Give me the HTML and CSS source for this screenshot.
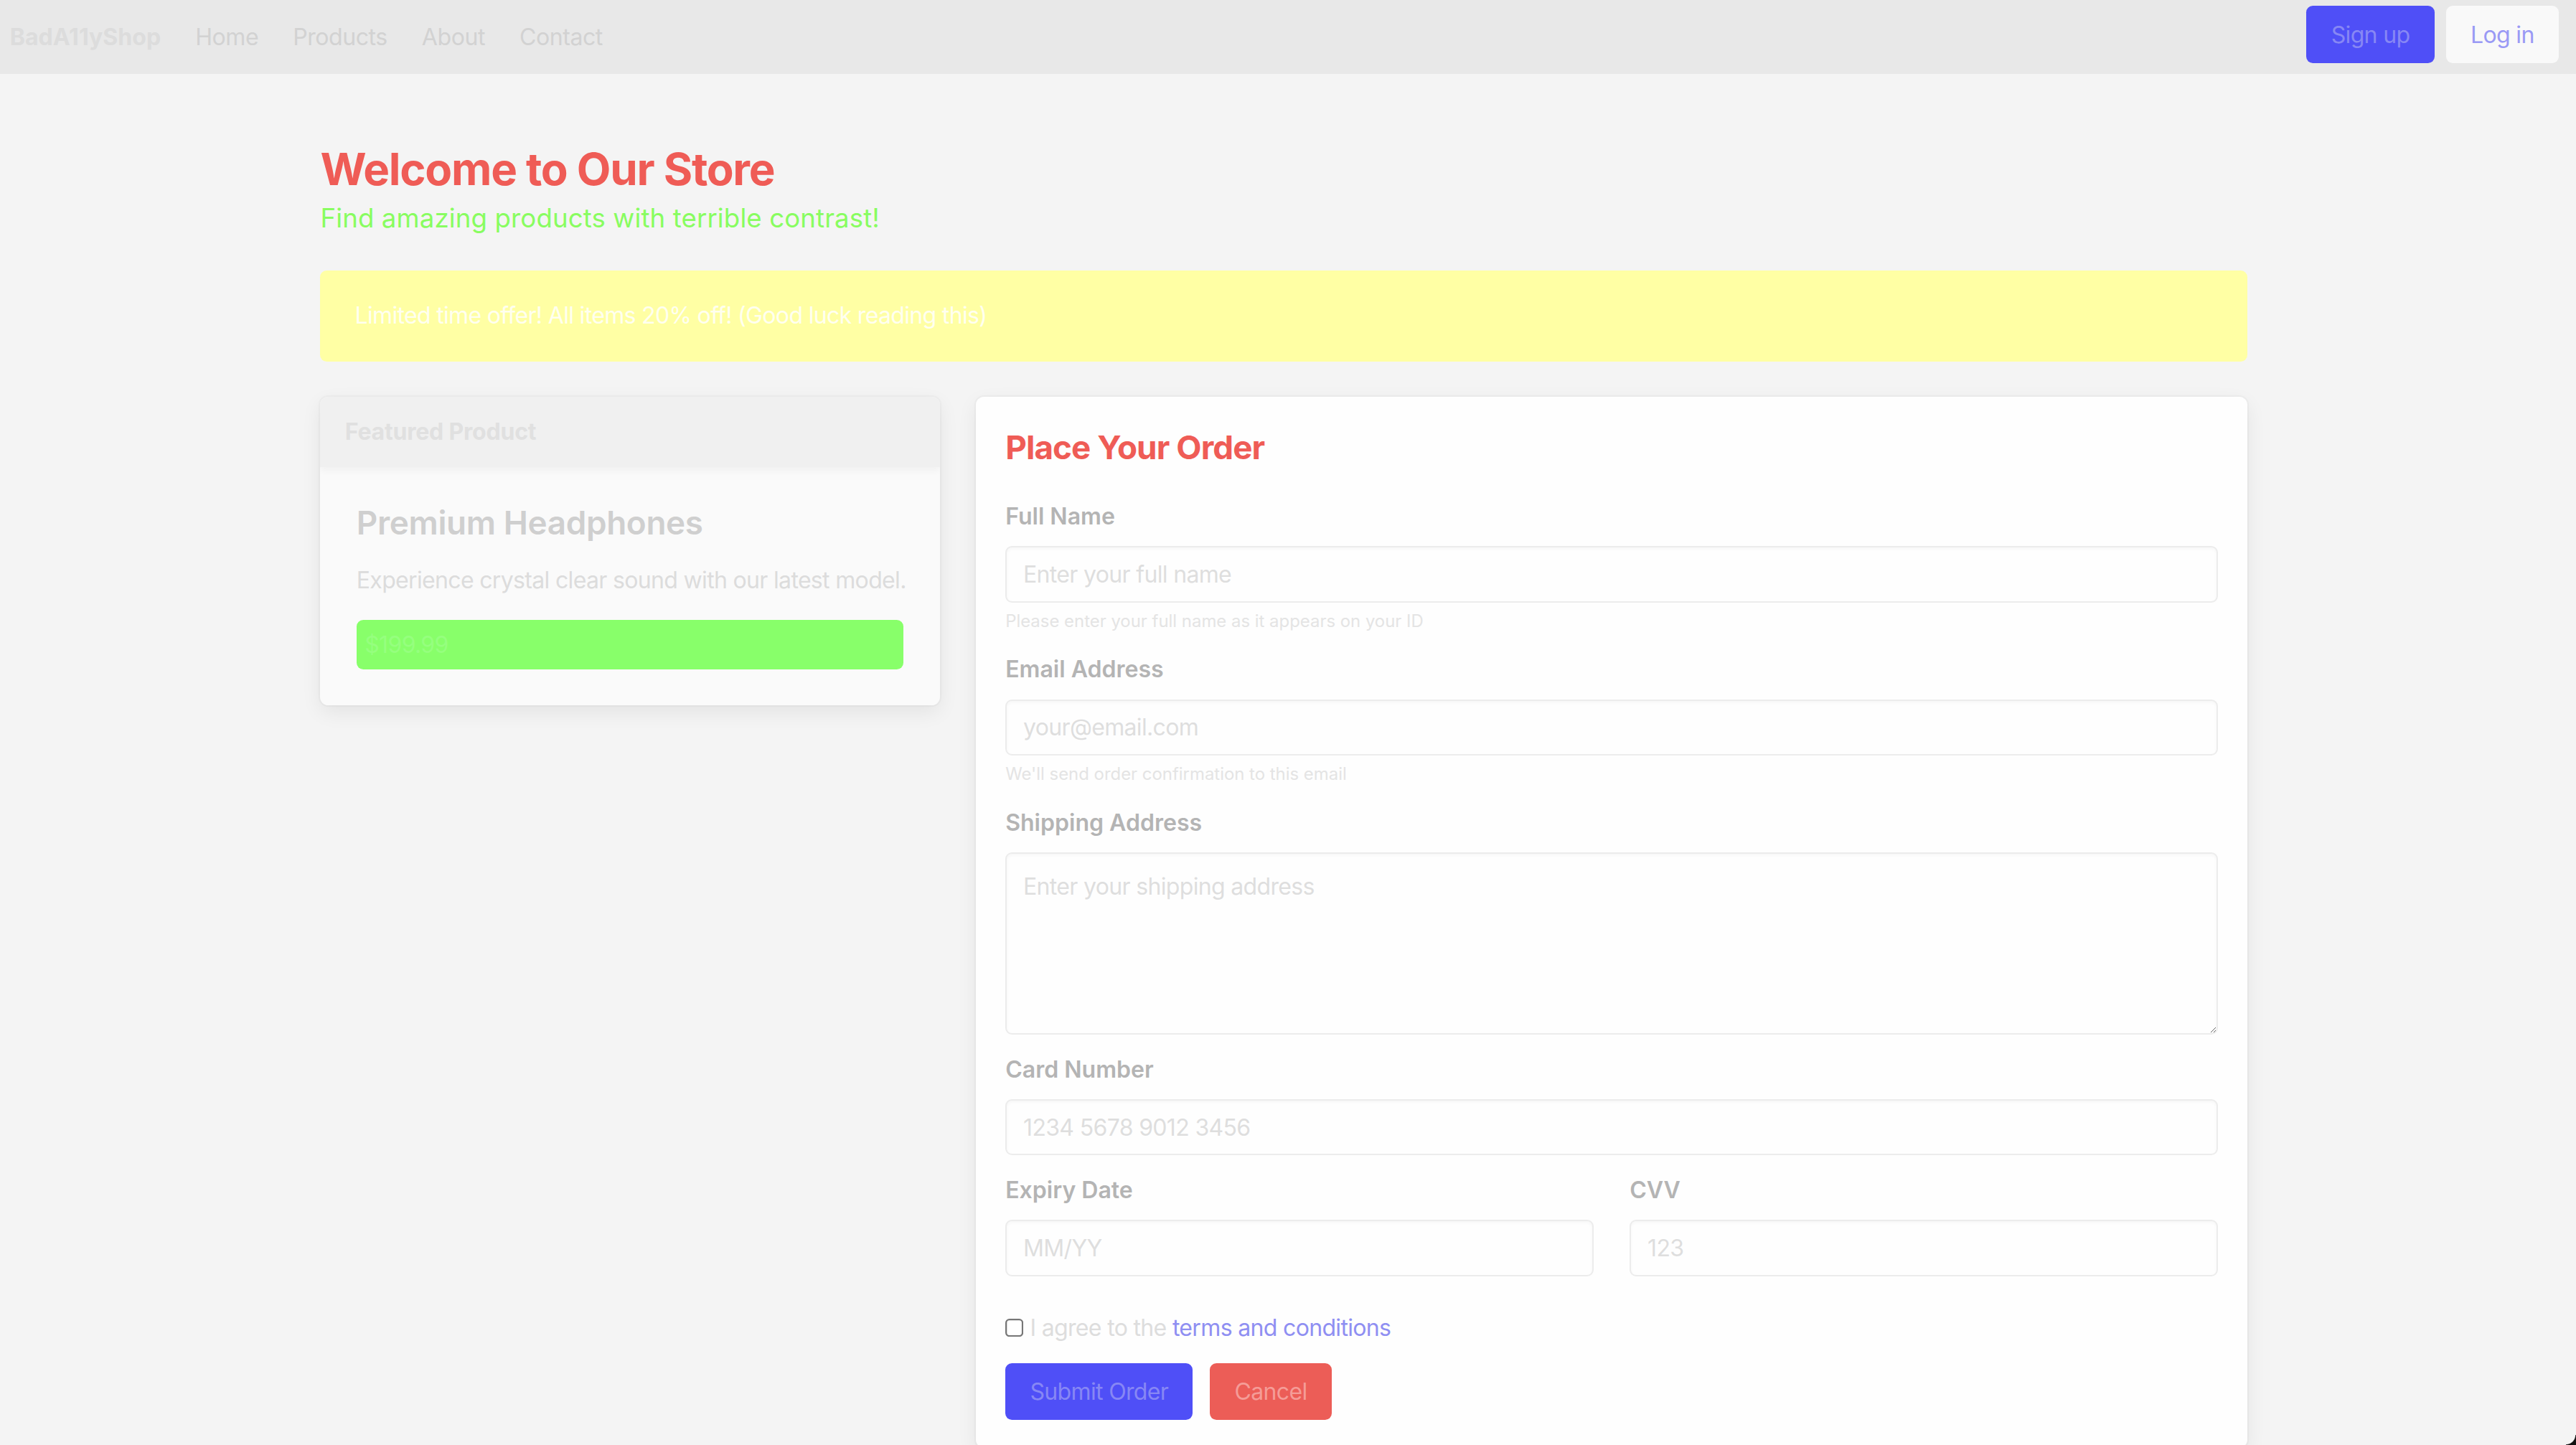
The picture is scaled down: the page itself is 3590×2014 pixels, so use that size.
FILE: index.html
```html
<!DOCTYPE html>
<html lang="en">
<head>
<meta charset="utf-8">
<title>BadA11yShop</title>
<link rel="stylesheet" href="styles.css">
</head>
<body>
<nav class="topbar">
  <div class="nav-left">
    <a class="brand" href="#">BadA11yShop</a>
    <a class="nav-link" href="#">Home</a>
    <a class="nav-link" href="#">Products</a>
    <a class="nav-link" href="#">About</a>
    <a class="nav-link" href="#">Contact</a>
  </div>
  <div class="nav-right">
    <button class="btn btn-primary" type="button">Sign up</button>
    <button class="btn btn-light" type="button">Log in</button>
  </div>
</nav>

<main class="container">
  <header class="hero">
    <h1 class="hero-title">Welcome to Our Store</h1>
    <p class="hero-subtitle">Find amazing products with terrible contrast!</p>
  </header>

  <div class="promo">Limited time offer! All items 20% off! (Good luck reading this)</div>

  <div class="content">
    <section class="card product-card">
      <div class="card-header">Featured Product</div>
      <div class="card-body">
        <h3 class="product-title">Premium Headphones</h3>
        <p class="product-desc">Experience crystal clear sound with our latest model.</p>
        <div class="price">$199.99</div>
      </div>
    </section>

    <section class="card order-card">
      <h2 class="order-title">Place Your Order</h2>
      <form class="order-form">
        <div class="form-group">
          <label class="form-label">Full Name</label>
          <input class="form-input" type="text" placeholder="Enter your full name">
          <small class="form-help">Please enter your full name as it appears on your ID</small>
        </div>
        <div class="form-group">
          <label class="form-label">Email Address</label>
          <input class="form-input" type="email" placeholder="your@email.com">
          <small class="form-help">We'll send order confirmation to this email</small>
        </div>
        <div class="form-group">
          <label class="form-label">Shipping Address</label>
          <textarea class="form-input form-textarea" placeholder="Enter your shipping address"></textarea>
        </div>
        <div class="form-group">
          <label class="form-label">Card Number</label>
          <input class="form-input" type="text" placeholder="1234 5678 9012 3456">
        </div>
        <div class="form-row">
          <div class="form-group">
            <label class="form-label">Expiry Date</label>
            <input class="form-input" type="text" placeholder="MM/YY">
          </div>
          <div class="form-group">
            <label class="form-label">CVV</label>
            <input class="form-input" type="text" placeholder="123">
          </div>
        </div>
        <div class="check-row">
          <input class="check" type="checkbox">
          <span class="check-text">I agree to the <a class="terms" href="#">terms and conditions</a></span>
        </div>
        <div class="actions">
          <button class="btn btn-primary btn-form" type="button">Submit Order</button>
          <button class="btn btn-danger btn-form" type="button">Cancel</button>
        </div>
      </form>
    </section>
  </div>
</main>
<div class="screen-corner"></div>
</body>
</html>
```

FILE: styles.css
```css
html {
  zoom: 2.2895;
}

body {
  margin: 0;
  background: #f4f4f4;
  font-family: Inter, "Liberation Sans", sans-serif;
  font-size: 14px;
  line-height: 20px;
  letter-spacing: -0.3px;
}

a {
  text-decoration: none;
}

/* ---------- top bar ---------- */
.topbar {
  height: 45px;
  background: #e8e8e8;
  display: flex;
  align-items: center;
  justify-content: space-between;
  padding: 0 10.5px 0 6px;
}

.nav-left {
  display: flex;
  align-items: center;
  gap: 21px;
}

.brand {
  font-weight: 700;
  font-size: 14px;
  letter-spacing: 0;
  color: #dcdcdc;
}

.nav-link {
  font-size: 14px;
  letter-spacing: -0.2px;
  color: #d2d2d2;
}

.nav-right {
  display: flex;
  gap: 7px;
  margin-top: -3px;
}

.btn {
  height: 35px;
  padding: 0 15px;
  border: 0;
  border-radius: 4px;
  font-family: Inter, "Liberation Sans", sans-serif;
  font-size: 14px;
  letter-spacing: -0.3px;
  cursor: pointer;
}

.btn-primary {
  background: #4f4ff7;
  color: #8787f4;
}

.btn-light {
  background: #f9f9f9;
  color: #9a9af5;
}

.btn-danger {
  background: #ec5d57;
  color: #f59c97;
}

/* ---------- main ---------- */
.container {
  width: 1173px;
  margin-left: 195px;
  padding-top: 42px;
}

.hero-title {
  margin: 0 0 2px;
  font-size: 27px;
  line-height: 32px;
  font-weight: 700;
  color: #ef5c56;
  letter-spacing: -0.55px;
}

.hero-subtitle {
  margin: 0;
  font-size: 16px;
  line-height: 24px;
  letter-spacing: 0.05px;
  color: #88fd60;
}

.promo {
  margin-top: 19.5px;
  background: #ffffa4;
  border-radius: 4px;
  padding: 17.75px 21px;
  color: #fffff0;
  font-size: 14px;
  line-height: 20px;
}

.content {
  margin-top: 21.5px;
  display: grid;
  grid-template-columns: 377px 1fr;
  gap: 22px;
  align-items: start;
}

.card {
  border-radius: 5px;
  box-shadow: 0 0 0 1px rgba(0, 0, 0, 0.025), 0 4px 12px rgba(0, 0, 0, 0.07);
}

/* ---------- product card ---------- */
.product-card {
  background: #fafafa;
  overflow: hidden;
}

.card-header {
  height: 43px;
  display: flex;
  align-items: center;
  padding: 0 15px;
  background: #f0f0f0;
  color: #e0e0e0;
  font-weight: 700;
  font-size: 14px;
  letter-spacing: -0.1px;
  box-shadow: 0 2px 4px rgba(0, 0, 0, 0.04);
  position: relative;
}

.card-body {
  padding: 20px 22px 22px;
}

.product-title {
  margin: 0 0 11px;
  font-size: 20px;
  line-height: 28px;
  font-weight: 600;
  letter-spacing: -0.15px;
  color: #cfcfcf;
}

.product-desc {
  margin: 0 0 14px;
  font-size: 14px;
  line-height: 20px;
  white-space: nowrap;
  color: #dcdcdc;
}

.price {
  background: #88ff6a;
  color: #95ff7e;
  border-radius: 4px;
  padding: 5px;
  font-size: 14px;
  line-height: 20px;
}

/* ---------- order card ---------- */
.order-card {
  background: #fefefe;
  padding: 17px 18px 17px;
}

.order-title {
  margin: 0 0 18px;
  font-size: 20px;
  line-height: 28px;
  font-weight: 700;
  letter-spacing: -0.4px;
  color: #ef5c56;
}

.form-group {
  margin-bottom: 11.3px;
}

.form-label {
  display: block;
  margin-bottom: 8px;
  font-size: 14px;
  line-height: 20px;
  font-weight: 600;
  letter-spacing: 0;
  color: #b4b4b4;
}

.form-input {
  display: block;
  box-sizing: border-box;
  width: 100%;
  height: 34.2px;
  margin: 0;
  padding: 0 10px;
  border: 1px solid #ececec;
  border-radius: 4px;
  background: #fefefe;
  box-shadow: inset 0 1px 2px rgba(0, 0, 0, 0.03);
  font-family: Inter, "Liberation Sans", sans-serif;
  font-size: 14px;
  letter-spacing: -0.3px;
  color: #999;
}

.form-input::placeholder {
  color: #dedede;
}

.form-textarea {
  height: 111px;
  padding: 10px;
  line-height: 20px;
  resize: vertical;
}

.form-help {
  display: block;
  margin-top: 3.7px;
  font-size: 10.45px;
  line-height: 16px;
  letter-spacing: 0;
  color: #e4e4e4;
}

.form-row {
  display: grid;
  grid-template-columns: 1fr 1fr;
  gap: 22px;
}

.check-row {
  display: flex;
  align-items: center;
  margin-top: 10.3px;
  font-size: 14px;
  line-height: 20px;
}

.check {
  width: 11.5px;
  height: 11.5px;
  margin: 0 3.5px 0 0;
}

.check-text {
  color: #dddddd;
}

.terms {
  color: #8f8ff2;
}

.actions {
  display: flex;
  gap: 10.4px;
  margin-top: 11.5px;
}

.btn-form {
  height: 34.4px;
  font-size: 14px;
}

.screen-corner {
  position: fixed;
  right: 0;
  bottom: 0;
  width: 6px;
  height: 6px;
  background: radial-gradient(circle at 0 0, transparent 5.5px, #111 6px);
}
```
